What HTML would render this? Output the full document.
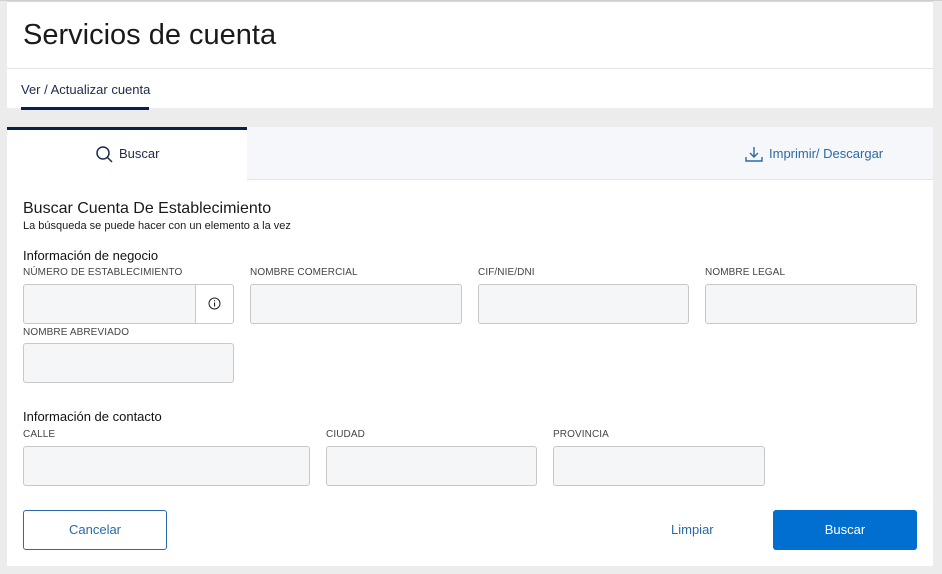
<!DOCTYPE html>
<html><head><meta charset="utf-8"><style>
*{margin:0;padding:0;box-sizing:border-box}
body{width:942px;height:574px;background:#ececec;font-family:"Liberation Sans",Arial,sans-serif;position:relative;overflow:hidden;color:#1a1a1a}
.a{position:absolute}
.hdr{left:7px;top:1px;width:926px;height:107px;background:#fff;border-top:1px solid #d8d8d8}
.card{left:7px;top:127px;width:926px;height:439px;background:#fff}
.lbl{font-size:10px;color:#444;letter-spacing:.1px}
.inp{background:#f5f6f8;border:1px solid #c8c8c8;border-radius:3px;height:40px}
.h{font-size:13px;color:#111}
</style></head><body>
<div class="a" style="left:0;top:0;width:942px;height:1px;background:#d0d0d0"></div>
<div class="a hdr">
  <div class="a" style="left:16px;top:17px;font-size:29px;color:#1a1a1a">Servicios de cuenta</div>
  <div class="a" style="left:0;top:66px;width:926px;height:1px;background:#e6e6e6"></div>
  <div class="a" style="left:14px;top:80px;font-size:13px;color:#1d2a4a">Ver / Actualizar cuenta</div>
  <div class="a" style="left:14px;top:105px;width:128px;height:3px;background:#0b1f4f"></div>
</div>
<div class="a card">
  <div class="a" style="left:240px;top:0;width:686px;height:53px;background:#f5f7fa;border-bottom:1px solid #e2e4e8"></div>
  <div class="a" style="left:0;top:0;width:240px;height:3px;background:#0b1f4f"></div>
  <svg class="a" style="left:88px;top:18px" width="20" height="20" viewBox="0 0 20 20"><circle cx="8" cy="8" r="6" fill="none" stroke="#1d2a4a" stroke-width="1.5"/><line x1="12.5" y1="12.5" x2="17" y2="17" stroke="#1d2a4a" stroke-width="1.5"/></svg>
  <div class="a" style="left:112px;top:19px;font-size:13px;color:#1d2a4a">Buscar</div>
  <svg class="a" style="left:737px;top:18px" width="20" height="18" viewBox="0 0 20 18"><path d="M10 2v10M6 8l4 4 4-4M2 12v4h16v-4" fill="none" stroke="#2b6aa8" stroke-width="1.4"/></svg>
  <div class="a" style="left:762px;top:19px;font-size:13px;color:#2b6aa8">Imprimir/ Descargar</div>

  <div class="a" style="left:16px;top:73px;font-size:16px;color:#1a1a1a">Buscar Cuenta De Establecimiento</div>
  <div class="a" style="left:16px;top:93px;font-size:11px">La búsqueda se puede hacer con un elemento a la vez</div>
  <div class="a h" style="left:16px;top:121px">Información de negocio</div>
  <div class="a lbl" style="left:16px;top:140px">NÚMERO DE ESTABLECIMIENTO</div>
  <div class="a lbl" style="left:243px;top:140px">NOMBRE COMERCIAL</div>
  <div class="a lbl" style="left:471px;top:140px">CIF/NIE/DNI</div>
  <div class="a lbl" style="left:698px;top:140px">NOMBRE LEGAL</div>
  <div class="a inp" style="left:16px;top:157px;width:211px"></div>
  <div class="a" style="left:188px;top:158px;width:1px;height:38px;background:#c8c8c8"></div>
  <div class="a" style="left:189px;top:158px;width:37px;height:38px;background:#fff;border-radius:0 3px 3px 0"></div>
  <svg class="a" style="left:201px;top:170px" width="13" height="13" viewBox="0 0 13 13"><circle cx="6.5" cy="6.5" r="5.5" fill="none" stroke="#222" stroke-width="1"/><rect x="6" y="5.5" width="1.1" height="4" fill="#222"/><rect x="6" y="3.2" width="1.1" height="1.1" fill="#222"/></svg>
  <div class="a inp" style="left:243px;top:157px;width:212px"></div>
  <div class="a inp" style="left:471px;top:157px;width:211px"></div>
  <div class="a inp" style="left:698px;top:157px;width:212px"></div>
  <div class="a lbl" style="left:16px;top:200px">NOMBRE ABREVIADO</div>
  <div class="a inp" style="left:16px;top:216px;width:211px"></div>

  <div class="a h" style="left:16px;top:282px">Información de contacto</div>
  <div class="a lbl" style="left:16px;top:302px">CALLE</div>
  <div class="a lbl" style="left:319px;top:302px">CIUDAD</div>
  <div class="a lbl" style="left:546px;top:302px">PROVINCIA</div>
  <div class="a inp" style="left:16px;top:319px;width:287px"></div>
  <div class="a inp" style="left:319px;top:319px;width:211px"></div>
  <div class="a inp" style="left:546px;top:319px;width:212px"></div>

  <div class="a" style="left:16px;top:383px;width:144px;height:40px;border:1px solid #2b6aa8;border-radius:3px;color:#2b6aa8;font-size:13px;text-align:center;line-height:38px">Cancelar</div>
  <div class="a" style="left:664px;top:395px;font-size:13px;color:#2b6aa8">Limpiar</div>
  <div class="a" style="left:766px;top:383px;width:144px;height:40px;background:#006fcf;border-radius:3px;color:#fff;font-size:13px;text-align:center;line-height:40px">Buscar</div>
</div>
</body></html>
